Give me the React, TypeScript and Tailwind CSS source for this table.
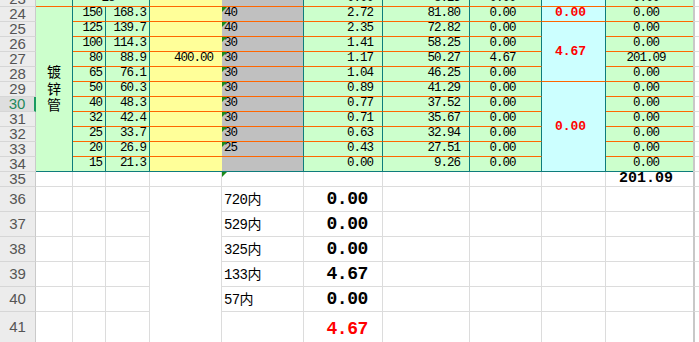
import React from 'react';

const mono = "font-['Liberation_Mono','DejaVu_Sans_Mono',monospace]";
const cjk = "font-['Noto_Sans_CJK_SC',sans-serif]";
const hdrFont = "font-['Liberation_Sans_Narrow','Liberation_Sans',sans-serif]";

const num = `${mono} text-[12.5px] leading-[14px] tracking-[-1px] text-black`;
const redBold = `${mono} text-[13px] leading-[14px] font-bold text-[#ff0000]`;
const bigBold = `${mono} text-[18px] leading-[20px] font-bold tracking-[-0.4px]`;

const OB = 'border-b border-b-[#ff6600]';
const TB = 'border-b border-b-[#0e7c7c]';
const TR = 'border-r border-r-[#0e7c7c]';
const LB = 'border-b border-b-[#dcdcdc]';
const LR = 'border-r border-r-[#dcdcdc]';

const GREEN = 'bg-[#ccffcc]';
const YELLOW = 'bg-[#ffff99]';
const GRAY = 'bg-[#c0c0c0]';
const CYAN = 'bg-[#ccffff]';

function Cell({ cls, children }: { cls: string; children?: React.ReactNode }) {
  return <div className={`relative flex min-w-0 overflow-hidden whitespace-nowrap ${cls}`}>{children}</div>;
}

function Tri() {
  return (
    <span className="absolute left-0 top-0 h-0 w-0 border-t-[5px] border-r-[5px] border-t-[#1b8a1b] border-r-transparent" />
  );
}

function RowHead({ n, sel }: { n: number; sel?: boolean }) {
  return (
    <Cell
      cls={`${hdrFont} items-center justify-center text-[15px] border-b border-b-[#d6d6d6] ${
        sel
          ? 'bg-[#dedede] text-[#1f8a5b] border-r-2 border-r-[#1a9a60]'
          : 'bg-[#ececec] text-[#555555] border-r border-r-[#cacaca]'
      }`}
    >
      {n}
    </Cell>
  );
}

function LCell() {
  return <div className="border-l-2 border-l-[#c8c8c8] border-b border-b-[#dcdcdc] bg-white" />;
}

const C = ['150', '125', '100', '80', '65', '50', '40', '32', '25', '20', '15'];
const D = ['168.3', '139.7', '114.3', '88.9', '76.1', '60.3', '48.3', '42.4', '33.7', '26.9', '21.3'];
const F = ['40', '40', '30', '30', '30', '30', '30', '30', '30', '25', ''];
const Gv = ['2.72', '2.35', '1.41', '1.17', '1.04', '0.89', '0.77', '0.71', '0.63', '0.43', '0.00'];
const H = ['81.80', '72.82', '58.25', '50.27', '46.25', '41.29', '37.52', '35.67', '32.94', '27.51', '9.26'];
const I = ['0.00', '0.00', '0.00', '4.67', '0.00', '0.00', '0.00', '0.00', '0.00', '0.00', '0.00'];
const K = ['0.00', '0.00', '0.00', '201.09', '0.00', '0.00', '0.00', '0.00', '0.00', '0.00', '0.00'];

const bottomRows = [
  { n: 36, label: '720内', v: '0.00' },
  { n: 37, label: '529内', v: '0.00' },
  { n: 38, label: '325内', v: '0.00' },
  { n: 39, label: '133内', v: '4.67' },
  { n: 40, label: '57内', v: '0.00' },
];

export default function App() {
  const cells: React.ReactNode[] = [];

  // Row 23 (partially visible)
  cells.push(<RowHead key="h23" n={23} />);
  cells.push(<Cell key="b23" cls={`${GREEN} ${TR} ${OB}`} />);
  cells.push(
    <Cell key="cd23" cls={`col-span-2 ${GREEN} ${TR} ${OB} items-end justify-center pr-[6px] pb-[1px] ${num}`}>
      18
    </Cell>
  );
  cells.push(<Cell key="e23" cls={`${YELLOW} ${OB}`} />);
  cells.push(<Cell key="f23" cls={`${GRAY} ${TR} ${OB}`} />);
  cells.push(
    <Cell key="g23" cls={`${GREEN} ${TR} ${OB} items-end justify-end pr-[9px] pb-[1px] ${num}`}>
      0.00
    </Cell>
  );
  cells.push(
    <Cell key="h23c" cls={`${GREEN} ${TR} ${OB} items-end justify-end pr-[9px] pb-[1px] ${num}`}>
      8.25
    </Cell>
  );
  cells.push(
    <Cell key="i23" cls={`${GREEN} ${TR} ${OB} items-end justify-center pr-[6px] pb-[1px] ${num}`}>
      0.00
    </Cell>
  );
  cells.push(<Cell key="j23" cls={`${CYAN} ${TR} ${OB}`} />);
  cells.push(
    <Cell key="k23" cls={`${GREEN} ${OB} items-end justify-center pr-[7px] pb-[1px] ${num}`}>
      0.00
    </Cell>
  );
  cells.push(<LCell key="l23" />);

  // Rows 24-34
  for (let i = 0; i < 11; i++) {
    const n = 24 + i;
    const bb = i === 10 ? TB : OB;
    cells.push(<RowHead key={`h${n}`} n={n} sel={n === 30} />);
    if (i === 0) {
      cells.push(
        <Cell
          key="b24"
          cls={`row-span-11 ${GREEN} ${TR} ${TB} flex-col items-center justify-center pb-[2px] ${cjk} text-[14px] leading-[16.5px] text-black`}
        >
          <span>镀</span>
          <span>锌</span>
          <span>管</span>
        </Cell>
      );
    }
    cells.push(
      <Cell key={`c${n}`} cls={`${GREEN} ${TR} ${bb} items-end justify-end pr-[3px] pb-[1px] ${num}`}>
        {C[i]}
      </Cell>
    );
    cells.push(
      <Cell key={`d${n}`} cls={`${GREEN} ${TR} ${bb} items-end justify-end pr-[3px] pb-[1px] ${num}`}>
        {D[i]}
      </Cell>
    );
    cells.push(
      <Cell key={`e${n}`} cls={`${YELLOW} ${bb} items-end justify-end pr-[9px] pb-[1px] ${num}`}>
        {n === 27 ? '400.00' : ''}
      </Cell>
    );
    cells.push(
      <Cell key={`f${n}`} cls={`${GRAY} ${TR} ${bb} items-end justify-start pl-[2px] pb-[1px] ${num}`}>
        {i < 10 && <Tri />}
        {F[i]}
      </Cell>
    );
    cells.push(
      <Cell key={`g${n}`} cls={`${GREEN} ${TR} ${bb} items-end justify-end pr-[9px] pb-[1px] ${num}`}>
        {Gv[i]}
      </Cell>
    );
    cells.push(
      <Cell key={`hh${n}`} cls={`${GREEN} ${TR} ${bb} items-end justify-end pr-[9px] pb-[1px] ${num}`}>
        {H[i]}
      </Cell>
    );
    cells.push(
      <Cell key={`i${n}`} cls={`${GREEN} ${TR} ${bb} items-end justify-center pr-[6px] pb-[1px] ${num}`}>
        {I[i]}
      </Cell>
    );
    if (i === 0) {
      cells.push(
        <Cell key="j24" cls={`${CYAN} ${TR} ${OB} items-end justify-center pr-[6px] pb-[1px] ${redBold}`}>
          0.00
        </Cell>
      );
    } else if (i === 1) {
      cells.push(
        <Cell key="j25" cls={`row-span-4 ${CYAN} ${TR} ${OB} items-center justify-center pr-[6px] pt-[1px] ${redBold}`}>
          4.67
        </Cell>
      );
    } else if (i === 5) {
      cells.push(
        <Cell key="j29" cls={`row-span-6 ${CYAN} ${TR} ${TB} items-center justify-center pr-[6px] pt-[1px] ${redBold}`}>
          0.00
        </Cell>
      );
    }
    cells.push(
      <Cell key={`k${n}`} cls={`${GREEN} ${bb} items-end justify-center pr-[7px] pb-[1px] ${num}`}>
        {K[i]}
      </Cell>
    );
    cells.push(<LCell key={`l${n}`} />);
  }

  // Row 35
  cells.push(<RowHead key="h35" n={35} />);
  cells.push(<Cell key="b35" cls={`bg-white ${LR} ${LB}`} />);
  cells.push(<Cell key="c35" cls={`bg-white ${LR} ${LB}`} />);
  cells.push(<Cell key="d35" cls={`bg-white ${LR} ${LB}`} />);
  cells.push(<Cell key="e35" cls={`bg-white ${LR} ${LB}`} />);
  cells.push(
    <Cell key="f35" cls={`bg-white ${LR} ${LB}`}>
      <Tri />
    </Cell>
  );
  cells.push(<Cell key="g35" cls={`bg-white ${LR} ${LB}`} />);
  cells.push(<Cell key="h35c" cls={`bg-white ${LR} ${LB}`} />);
  cells.push(<Cell key="i35" cls={`bg-white ${LR} ${LB}`} />);
  cells.push(<Cell key="j35" cls={`bg-white ${LR} ${LB}`} />);
  cells.push(
    <Cell
      key="k35"
      cls={`bg-white ${LB} items-end justify-center pr-[7px] ${mono} text-[15px] leading-[15px] font-bold tracking-[0px] text-black`}
    >
      201.09
    </Cell>
  );
  cells.push(<LCell key="l35" />);

  // Rows 36-40
  bottomRows.forEach((r, idx) => {
    cells.push(<RowHead key={`h${r.n}`} n={r.n} />);
    cells.push(<Cell key={`b${r.n}`} cls={`bg-white ${LR} ${LB}`} />);
    cells.push(<Cell key={`c${r.n}`} cls={`bg-white ${LR} ${LB}`} />);
    cells.push(<Cell key={`d${r.n}`} cls={`bg-white ${LR} ${LB}`} />);
    if (idx === 0) {
      cells.push(<Cell key="e36" cls={`row-span-6 bg-white ${LR}`} />);
    }
    cells.push(
      <Cell
        key={`f${r.n}`}
        cls={`bg-white ${LR} ${LB} items-end justify-start pl-[2px] pb-[2px] font-['Liberation_Mono','Noto_Sans_CJK_SC',monospace] text-[14px] leading-[18px] tracking-[-0.6px] text-black`}
      >
        {r.label}
      </Cell>
    );
    cells.push(
      <Cell key={`g${r.n}`} cls={`bg-white ${LR} ${LB} items-end justify-end pr-[14px] pb-[2px] ${bigBold} text-black`}>
        {r.v}
      </Cell>
    );
    cells.push(<Cell key={`hh${r.n}`} cls={`bg-white ${LR} ${LB}`} />);
    cells.push(<Cell key={`i${r.n}`} cls={`bg-white ${LR} ${LB}`} />);
    cells.push(<Cell key={`j${r.n}`} cls={`bg-white ${LR} ${LB}`} />);
    cells.push(<Cell key={`k${r.n}`} cls={`bg-white ${LB}`} />);
    cells.push(<LCell key={`l${r.n}`} />);
  });

  // Row 41
  cells.push(<RowHead key="h41" n={41} />);
  cells.push(<Cell key="b41" cls={`bg-white ${LR} ${LB}`} />);
  cells.push(<Cell key="c41" cls={`bg-white ${LR} ${LB}`} />);
  cells.push(<Cell key="d41" cls={`bg-white ${LR} ${LB}`} />);
  cells.push(<Cell key="f41" cls={`bg-white ${LR} ${LB}`} />);
  cells.push(
    <Cell key="g41" cls={`bg-white ${LR} ${LB} items-end justify-end pr-[14px] pb-[3px] ${bigBold} text-[#ff0000]`}>
      4.67
    </Cell>
  );
  cells.push(<Cell key="h41c" cls={`bg-white ${LR} ${LB}`} />);
  cells.push(<Cell key="i41" cls={`bg-white ${LR} ${LB}`} />);
  cells.push(<Cell key="j41" cls={`bg-white ${LR} ${LB}`} />);
  cells.push(<Cell key="k41" cls={`bg-white ${LB}`} />);
  cells.push(<LCell key="l41" />);

  return (
    <div className="h-[342px] w-[699px] overflow-hidden bg-white">
      <div className="-mt-[8px] grid grid-cols-[36px_37px_33px_44px_72px_82px_79px_87px_72px_64px_87px_1fr] grid-rows-[repeat(13,15px)_repeat(5,25px)_31px]">
        {cells}
      </div>
    </div>
  );
}
